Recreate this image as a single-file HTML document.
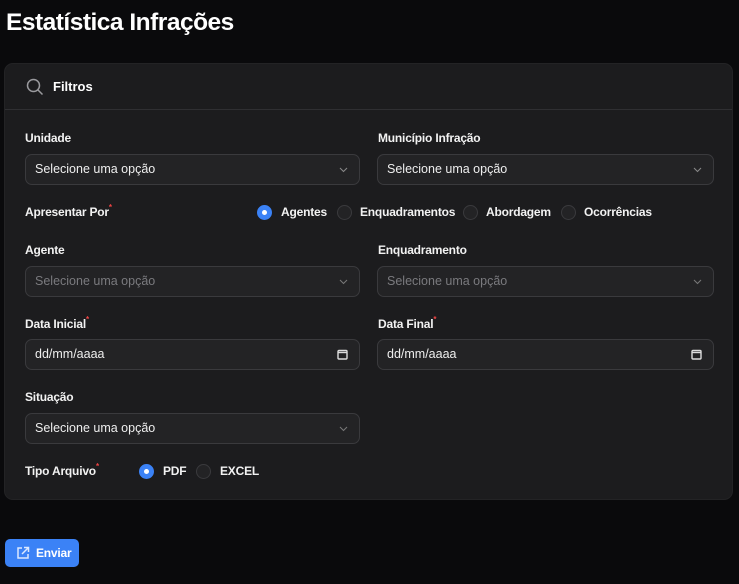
<!DOCTYPE html>
<html><head><meta charset="utf-8"><style>
*{box-sizing:border-box;margin:0;padding:0}
body{width:739px;height:584px;background:#0a0a0c;font-family:"Liberation Sans",sans-serif;color:#fff;position:relative;overflow:hidden}
.abs{position:absolute}
h1{position:absolute;left:6px;top:9px;font-size:24.5px;font-weight:bold;letter-spacing:-0.5px}
.card{position:absolute;left:4px;top:63px;width:729px;height:437px;background:#1c1c1e;border:1px solid #232325;border-radius:9px}
.hdr{position:absolute;left:0;top:0;right:0;height:46px;border-bottom:1px solid #2f2f32}
.lbl{position:absolute;font-size:12px;font-weight:bold;color:#f2f2f2;letter-spacing:-0.2px}
.req{color:#ef4444;font-size:8px;vertical-align:top;position:relative;top:-2px}
.sel{position:absolute;height:31px;background:#232325;border:1px solid #3a3a3d;border-radius:7px;font-size:12.5px;color:#eee;padding-left:9px;line-height:29px}
.sel.dim{color:#7a7a7e}
.sel svg{position:absolute;right:11px;top:12px}
.radio{position:absolute;width:15px;height:15px;border-radius:50%;background:#232325;border:1px solid #3a3a3d}
.radio.on{background:#3b82f6;border-color:#3b82f6}
.radio.on::after{content:"";position:absolute;left:4px;top:4px;width:5px;height:5px;border-radius:50%;background:#fff}
.rt{position:absolute;font-size:12px;font-weight:bold;color:#f2f2f2;letter-spacing:-0.2px}
.btn{position:absolute;left:5px;top:539px;width:74px;height:28px;background:#3b82f6;border-radius:5px;font-size:12px;font-weight:bold;line-height:28px;padding-left:31px;letter-spacing:-0.2px}
</style></head><body>
<h1>Estatística Infrações</h1>
<div class="card"><div class="hdr"></div></div>
<svg class="abs" style="left:26px;top:78px" width="18" height="18" viewBox="0 0 18 18" fill="none" stroke="#9a9a9e" stroke-width="1.5"><circle cx="7.5" cy="7.5" r="6"/><path d="M12 12l4.5 4.5"/></svg>
<div class="abs" style="left:53px;top:79px;font-size:13px;font-weight:bold">Filtros</div>

<div class="lbl" style="left:25px;top:131px">Unidade</div>
<div class="lbl" style="left:378px;top:131px">Município Infração</div>
<div class="sel" style="left:25px;top:154px;width:335px">Selecione uma opção<svg width="9" height="6" viewBox="0 0 9 6" fill="none" stroke="#888" stroke-width="1.1"><path d="M1 1l3.5 3.5 3.5-3.5"/></svg></div>
<div class="sel" style="left:377px;top:154px;width:337px">Selecione uma opção<svg width="9" height="6" viewBox="0 0 9 6" fill="none" stroke="#888" stroke-width="1.1"><path d="M1 1l3.5 3.5 3.5-3.5"/></svg></div>

<div class="lbl" style="left:25px;top:205px">Apresentar Por<span class="req">*</span></div>
<div class="radio on" style="left:257px;top:205px"></div><div class="rt" style="left:281px;top:205px">Agentes</div>
<div class="radio" style="left:337px;top:205px"></div><div class="rt" style="left:360px;top:205px">Enquadramentos</div>
<div class="radio" style="left:463px;top:205px"></div><div class="rt" style="left:486px;top:205px">Abordagem</div>
<div class="radio" style="left:561px;top:205px"></div><div class="rt" style="left:584px;top:205px">Ocorrências</div>

<div class="lbl" style="left:25px;top:243px">Agente</div>
<div class="lbl" style="left:378px;top:243px">Enquadramento</div>
<div class="sel dim" style="left:25px;top:266px;width:335px">Selecione uma opção<svg width="9" height="6" viewBox="0 0 9 6" fill="none" stroke="#777" stroke-width="1.1"><path d="M1 1l3.5 3.5 3.5-3.5"/></svg></div>
<div class="sel dim" style="left:377px;top:266px;width:337px">Selecione uma opção<svg width="9" height="6" viewBox="0 0 9 6" fill="none" stroke="#777" stroke-width="1.1"><path d="M1 1l3.5 3.5 3.5-3.5"/></svg></div>

<div class="lbl" style="left:25px;top:317px">Data Inicial<span class="req">*</span></div>
<div class="lbl" style="left:378px;top:317px">Data Final<span class="req">*</span></div>
<div class="sel" style="left:25px;top:339px;width:335px">dd/mm/aaaa<svg style="top:9px" width="11" height="11" viewBox="0 0 11 11" fill="none" stroke="#ddd" stroke-width="1.4"><rect x="1" y="1.5" width="9" height="8.5" rx="1"/><path d="M1 3.5h9"/></svg></div>
<div class="sel" style="left:377px;top:339px;width:337px">dd/mm/aaaa<svg style="top:9px" width="11" height="11" viewBox="0 0 11 11" fill="none" stroke="#ddd" stroke-width="1.4"><rect x="1" y="1.5" width="9" height="8.5" rx="1"/><path d="M1 3.5h9"/></svg></div>

<div class="lbl" style="left:25px;top:390px">Situação</div>
<div class="sel" style="left:25px;top:413px;width:335px">Selecione uma opção<svg width="9" height="6" viewBox="0 0 9 6" fill="none" stroke="#777" stroke-width="1.1"><path d="M1 1l3.5 3.5 3.5-3.5"/></svg></div>

<div class="lbl" style="left:25px;top:464px">Tipo Arquivo<span class="req">*</span></div>
<div class="radio on" style="left:139px;top:464px"></div><div class="rt" style="left:163px;top:464px">PDF</div>
<div class="radio" style="left:196px;top:464px"></div><div class="rt" style="left:220px;top:464px">EXCEL</div>

<div class="btn">Enviar</div>
<svg class="abs" style="left:16px;top:546px" width="14" height="14" viewBox="0 0 14 14" fill="none" stroke="#dbe8ff" stroke-width="1.5"><path d="M6 2H2v10h10V8"/><path d="M8 1.5h4.5V6M12.5 1.5L6 8"/></svg>
</body></html>
